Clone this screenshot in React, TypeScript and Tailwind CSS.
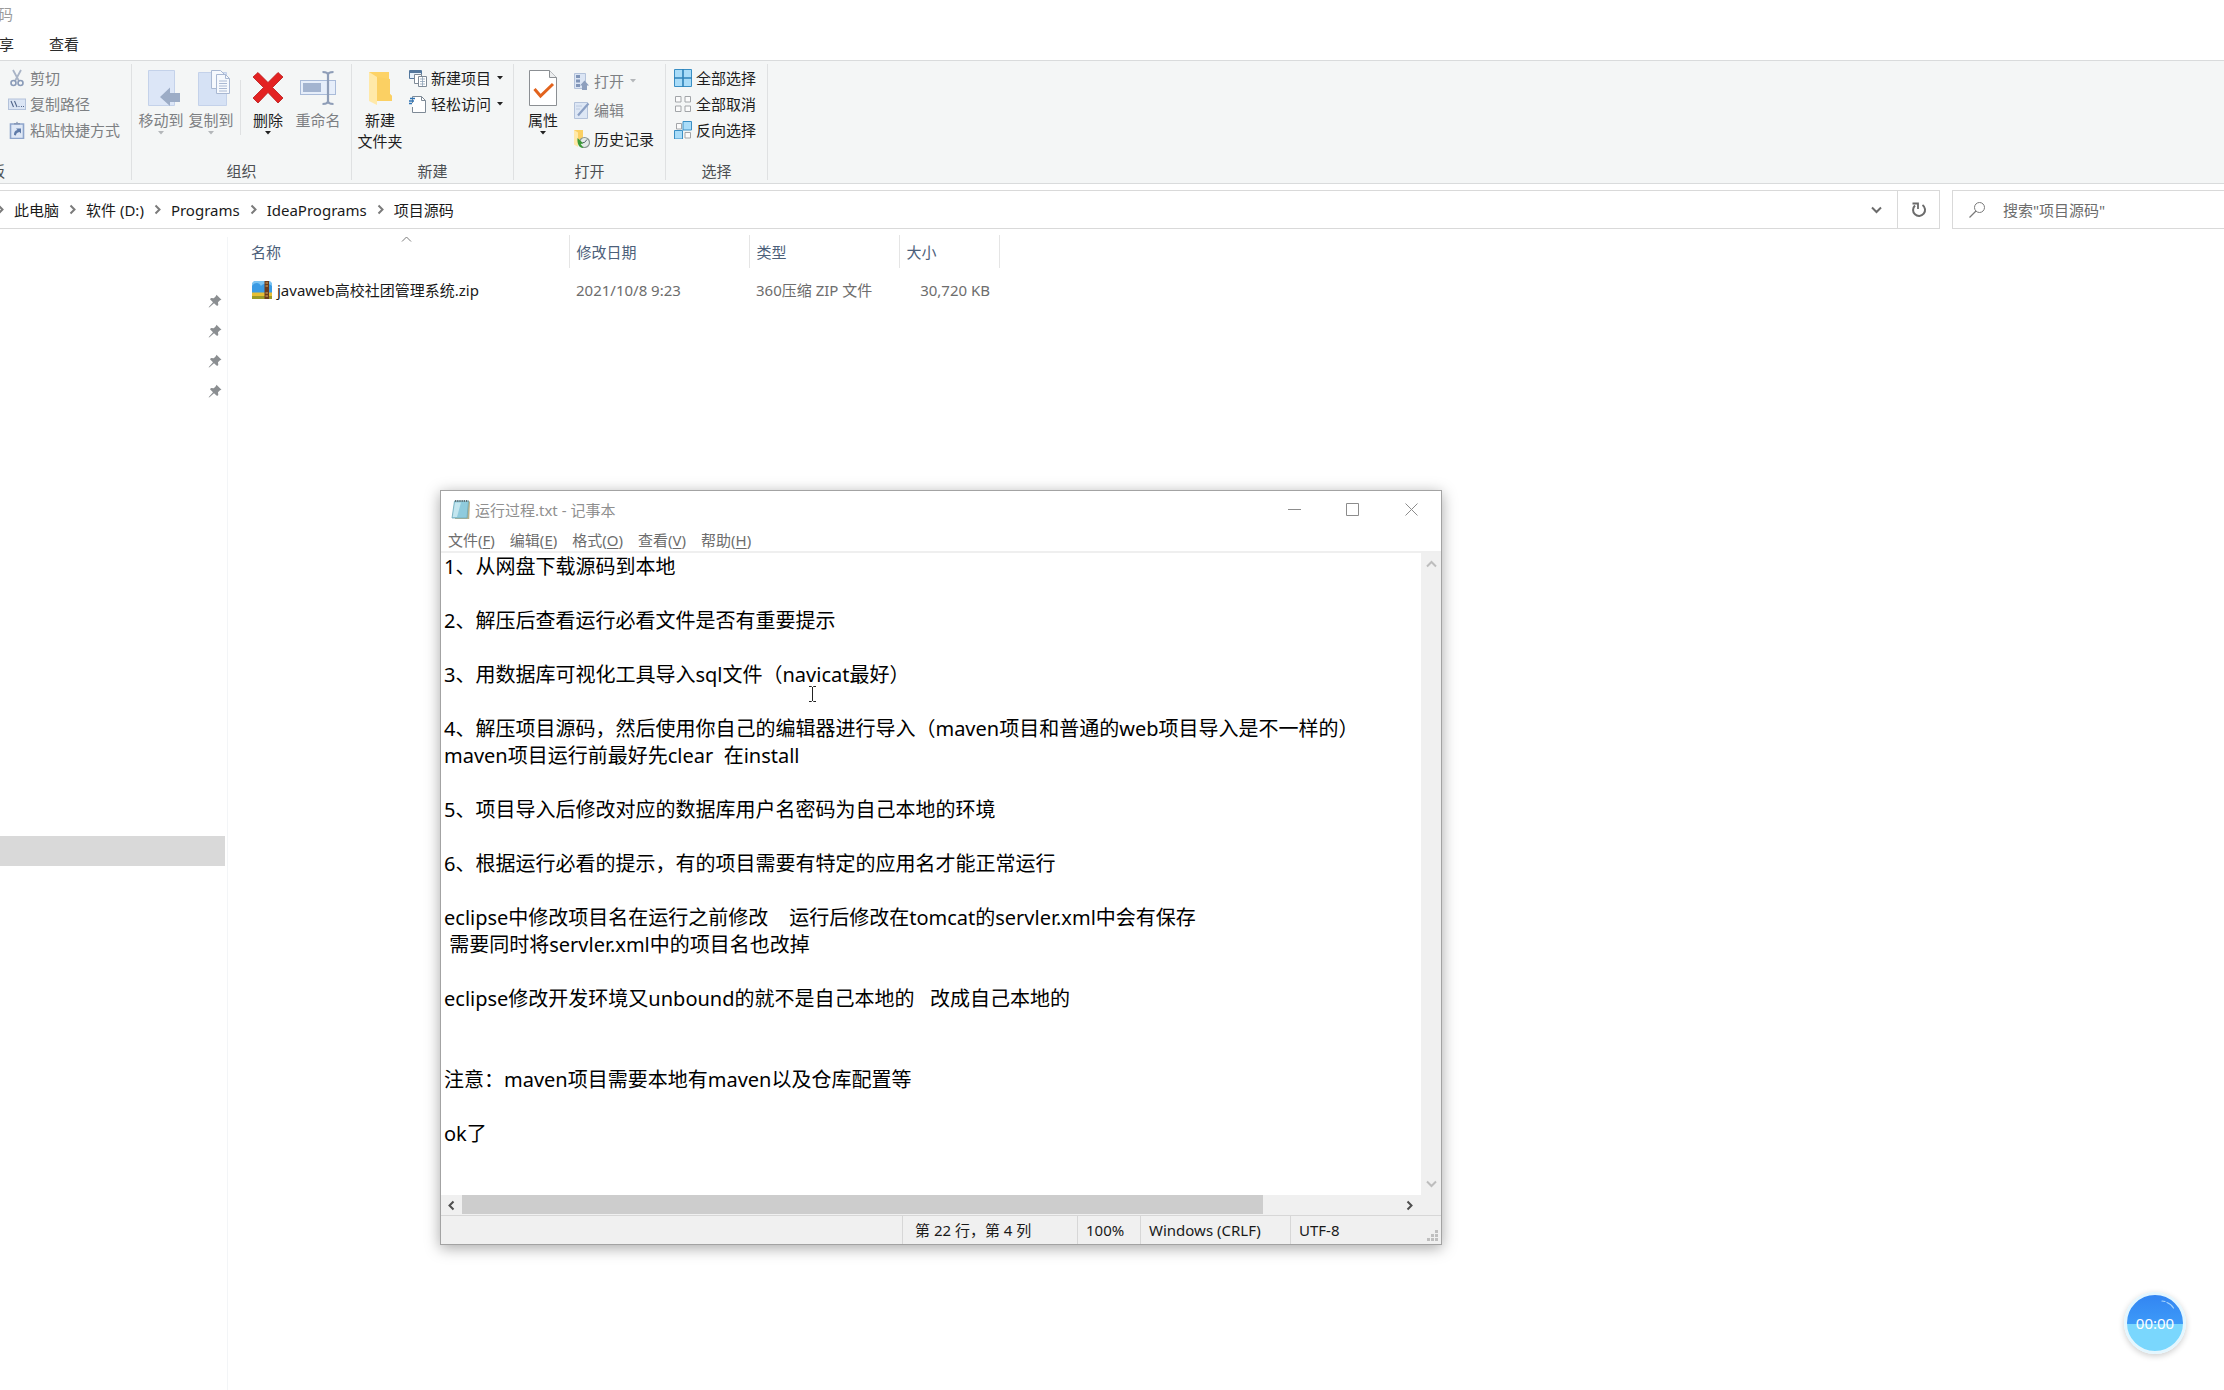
import React from "react";

type IconProps = { children: React.ReactNode; className?: string; box?: string };

const Svg: React.FC<IconProps> = ({ children, className = "w-[18px] h-[18px]", box = "0 0 18 18" }) => (
  <svg className={`shrink-0 ${className}`} viewBox={box} fill="none" aria-hidden="true">
    {children}
  </svg>
);

const Caret: React.FC<{ muted?: boolean }> = ({ muted }) => (
  <Svg className="w-[6px] h-[4px]" box="0 0 6 4">
    <path d="M0 0h6L3 3.4z" fill={muted ? "#b4b7ba" : "#222"} />
  </Svg>
);

const CutIcon = () => (
  <Svg>
    <path d="M5 1l6 11M13 1L7 12" stroke="#a9b4c6" strokeWidth="1.8" />
    <circle cx="5.5" cy="14" r="2.5" stroke="#8a9bb8" strokeWidth="1.6" />
    <circle cx="12.5" cy="14" r="2.5" stroke="#8a9bb8" strokeWidth="1.6" />
  </Svg>
);

const PathIcon = () => (
  <Svg>
    <rect x=".5" y="4" width="17" height="10.5" fill="#dbe5f4" stroke="#b3c2da" />
    <path d="M3 6l2.5 6M6.500 6L9 12" stroke="#51658a" strokeWidth="1.1" />
    <path d="M10.500 11.500h1M13 11.500h1M15 11.500h1" stroke="#51658a" />
  </Svg>
);

const PasteShortcutIcon = () => (
  <Svg>
    <path d="M2.500 3h13v14.500h-13z" fill="#dfe8f6" stroke="#8ea5cb" strokeWidth="1.6" />
    <path d="M6 3.500V2h2l1-1.500L10 2h2v1.500z" fill="#8798b5" />
    <path d="M6 14c0-3 1-4.500 3.500-5L8 7.500h5v5L11.500 11C9 11.500 8 12.500 8 14.500z" fill="#5f7ba8" />
  </Svg>
);

const MoveToIcon = () => (
  <Svg className="w-10 h-9" box="-6 0 40 36">
    <path d="M1.500.5h26v35h-26z" fill="#dce6f7" stroke="#c4d2ea" />
    <path d="M13 27l10-9.500v5.500h10v9H23v4z" fill="#9cacc6" />
  </Svg>
);

const CopyToIcon = () => (
  <Svg className="w-10 h-9" box="-6 0 40 36">
    <path d="M1.500 2.500h28v33h-28z" fill="#d6e2f5" stroke="#c4d2ea" />
    <path d="M14.500.5h9l4 4v14h-13z" fill="#f6f9fd" stroke="#a9b8d2" />
    <path d="M19.500 4.500h9l4 4v15h-13z" fill="#f6f9fd" stroke="#a9b8d2" />
    <path d="M28.500 4.500v4h4M22 11h8M22 13.500h8M22 16h8M22 18.500h8M22 21h8" stroke="#a9b8d2" />
  </Svg>
);

const DeleteIcon = () => (
  <Svg className="w-8 h-9" box="0 0 32 36">
    <path d="M1 7l5-4.500 10 10 10-10L31 7 20.500 17.500 31 28l-5 5-10-10.500L6 33l-5-5 10.500-10.500z" fill="#e32222" stroke="#b81818" strokeWidth=".8" />
  </Svg>
);

const RenameIcon = () => (
  <Svg className="w-[38px] h-9" box="0 0 38 36">
    <rect x="1.500" y="10.500" width="35" height="14" fill="#e6eefa" stroke="#a9bbd9" />
    <rect x="4" y="13" width="18" height="9" fill="#a3b4d0" />
    <path d="M23.500 2c3 0 5.500.8 5.500 3v26c0 2-2.500 3-5.500 3M34.500 2c-3 0-5.500.8-5.500 3v26c0 2 2.500 3 5.500 3" stroke="#8e9db7" strokeWidth="2.200" />
  </Svg>
);

const FolderIcon = () => (
  <Svg className="w-6 h-9" box="0 0 24 36">
    <path d="M1 2h20v21l3 3v5H1z" fill="#fdd367" />
    <path d="M9 7v24h15v-5l-2-2V9z" fill="#fbd063" />
    <path d="M1 2l8 5v28L1 31z" fill="#ffe9a9" />
  </Svg>
);

const NewItemIcon = () => (
  <Svg>
    <path d="M.5 1.500h12v8H.5z" fill="#e6f1fb" stroke="#54789e" />
    <path d="M.5 2h12v2H.5z" fill="#54789e" />
    <path d="M5.500 5.500h7v9h-7z" fill="#fff" stroke="#7e8a96" />
    <path d="M9.500 7.500h8v10h-8z" fill="#fff" stroke="#7e8a96" />
    <path d="M11 10h5M11 12.500h5M11 15h5M13.500 8v9" stroke="#8fa3b7" strokeWidth=".8" />
  </Svg>
);

const EasyAccessIcon = () => (
  <Svg>
    <path d="M3.500 8V1.500h9l4 4v12h-13V12" fill="#fff" stroke="#7e8a96" />
    <path d="M12.500 1.500v4h4" stroke="#7e8a96" />
    <path d="M1 3.500h5M0 6h5M0 8.500h3" stroke="#2f74b5" strokeWidth="1.300" />
  </Svg>
);

const PropertiesIcon = () => (
  <Svg className="w-[30px] h-9" box="0 0 30 36">
    <path d="M1.500.5h20l7 7v28h-27z" fill="#fff" stroke="#8b8f93" />
    <path d="M21.500.5v7h7" fill="#eceeef" stroke="#8b8f93" />
    <path d="M6.500 19l6 7L25 14" stroke="#e2631d" strokeWidth="3" />
  </Svg>
);

const OpenIcon = () => (
  <Svg>
    <path d="M2.500 1.500h11v15h-11z" fill="#dbe5f4" stroke="#b3c2da" />
    <path d="M4 3h4v3H4zM4 7.500h4v3H4zM4 12h4v3H4z" fill="#8095b8" />
    <path d="M8 13.500l4.500-5 4.500 5h-2V18h-5v-4.500z" fill="#8d9fbd" />
  </Svg>
);

const EditIcon = () => (
  <Svg>
    <path d="M2.500 1.500h13v16h-13z" fill="#dde7f5" stroke="#b3c2da" />
    <path d="M16.500 2.500L9 11l-3 3.500" stroke="#8ba0c4" strokeWidth="2.200" />
    <path d="M4 5h6M4 8h4" stroke="#bccae0" />
  </Svg>
);

const HistoryIcon = () => (
  <Svg>
    <path d="M2 0h9v13H2z" fill="#fbd063" />
    <path d="M2 0l4 2.500V17l-4-2.500z" fill="#ffe9a9" />
    <circle cx="12.500" cy="12.500" r="5" fill="#e3ebe8" stroke="#8b9693" strokeWidth="1.200" />
    <path d="M12.500 12.500l2.500-3M12.500 12.500h-2" stroke="#55636e" />
    <path d="M5.500 8l6 5.500-3 .5 3 4c-4.500 0-6.500-4-6-10z" fill="#3b9a36" />
  </Svg>
);

const SelectAllIcon = () => (
  <Svg>
    <path d="M.5.5h17v17H.5z" fill="#a9dcf8" stroke="#3a8fc4" />
    <path d="M9 0v18M0 9h18" stroke="#2f83b9" strokeWidth="1.600" />
  </Svg>
);

const SelectNoneIcon = () => (
  <Svg>
    <path d="M1.500 1.500h5.500V7H1.500zM11 1.500h5.500V7H11zM1.500 11h5.500v5.500H1.500zM11 11h5.500v5.500H11z" fill="#fbfbfb" stroke="#a2a5a8" />
  </Svg>
);

const InvertIcon = () => (
  <Svg>
    <path d="M2.500 2.500h5V8h-5zM11 11.500h5.500V17H11z" fill="#fbfbfb" stroke="#a2a5a8" />
    <path d="M9 .5h8.500V9H9zM.5 9.500h8V18h-8z" fill="#a9dcf8" stroke="#3a8fc4" />
  </Svg>
);

const PinIcon = () => (
  <Svg className="w-[14px] h-[14px]" box="0 0 14 14">
    <path d="M8.500.8L13.500 5.800l-1.500.4-2 2 .3 2.800-1.200 1L6 9.200 1.500 13.200.6 13.600l.4-.9L5 8.200 2 5.200l1-1.200 2.800.3 2-2z" fill="#8b8e91" />
  </Svg>
);

const ZipIcon = () => (
  <Svg className="w-[20px] h-[18px]" box="0 0 20 18">
    <path d="M0 2l2-2h16l2 2v12H0z" fill="#7cc4f2" />
    <path d="M0 5c3-4 7-4 9 0 2-3 8-3 11 0v7H0z" fill="#3b9be4" />
    <path d="M0 11.500h20V18H0z" fill="#e6bf35" />
    <path d="M0 15h20v3H0z" fill="#9b9a26" />
    <path d="M12.500 0h4.500v18h-4.500z" fill="#6b3a1c" />
    <path d="M13.500 2h2.500M13.500 5h2.500M13.500 12h2.500M13.500 15h2.500" stroke="#e0b060" />
  </Svg>
);

const NotepadIcon = () => (
  <Svg className="w-[20px] h-[21px]" box="0 0 20 21">
    <path d="M5 2.500h14l-.8 17.500H4z" fill="#b8b18a" />
    <path d="M3.500 2h14L16 19H1z" fill="#8fcbdd" stroke="#6fa9b9" strokeWidth=".8" />
    <path d="M4 3.500h6L6 18H1.800z" fill="#c3e6ef" />
    <path d="M4 2h13.500" stroke="#5f6f75" strokeWidth="2" strokeDasharray="1.200 1" />
  </Svg>
);

type Chevron = "right" | "left" | "up" | "down";
const chevronPaths: Record<Chevron, string> = {
  right: "M3.500 1.500L7.500 5.500 3.500 9.500",
  left: "M7.500 1.500L3.500 5.500 7.500 9.500",
  up: "M1 7.500L5.500 3 10 7.500",
  down: "M1 3.500L5.500 8 10 3.500",
};

const Chev: React.FC<{ dir: Chevron; color?: string; width?: number }> = ({ dir, color = "#7b7b7b", width = 2 }) => (
  <Svg className="w-[11px] h-[11px]" box="0 0 11 11">
    <path d={chevronPaths[dir]} stroke={color} strokeWidth={width} />
  </Svg>
);

type ButtonProps = {
  icon: React.ReactNode;
  label: React.ReactNode;
  muted?: boolean;
  caret?: boolean;
};

const BigButton: React.FC<ButtonProps> = ({ icon, label, muted, caret }) => (
  <button className={`flex w-[50px] flex-col items-center pt-[9px] leading-[21px] ${muted ? "text-[#7d8083]" : "text-[#1e1e1e]"}`}>
    {icon}
    <span className="mt-1 whitespace-nowrap">{label}</span>
    {caret && <Caret muted={muted} />}
  </button>
);

const SmallButton: React.FC<ButtonProps & { tall?: boolean }> = ({ icon, label, muted, caret, tall }) => (
  <button className={`flex items-center gap-1 whitespace-nowrap ${tall ? "h-[29px]" : "h-[26px]"} ${muted ? "text-[#7d8083]" : "text-[#1e1e1e]"}`}>
    {icon}
    {label}
    {caret && (
      <span className="ml-0.5">
        <Caret muted={muted} />
      </span>
    )}
  </button>
);

const Group: React.FC<{ label: string; className?: string; children: React.ReactNode }> = ({ label, className = "", children }) => (
  <>
    <section className="flex flex-col justify-between">
      <div className={`flex ${className}`}>{children}</div>
      <h2 className="h-6 text-center leading-6 text-[#4c4f52]">{label}</h2>
    </section>
    <div className="my-[3px] w-px bg-[#dfe1e2]" />
  </>
);

const Ribbon = () => (
  <div className="flex h-[124px] overflow-hidden border-y border-[#d9dbdc] bg-[#f4f6f6]">
    <section className="flex w-[131px] shrink-0 flex-col justify-between">
      <div className="flex flex-col pt-1 pl-2">
        <SmallButton icon={<CutIcon />} label="剪切" muted />
        <SmallButton icon={<PathIcon />} label="复制路径" muted />
        <SmallButton icon={<PasteShortcutIcon />} label="粘贴快捷方式" muted />
      </div>
      <h2 className="flex h-6 w-[5px] justify-end overflow-hidden leading-6 text-[#4c4f52]">板</h2>
    </section>
    <div className="my-[3px] w-px bg-[#dfe1e2]" />
    <Group label="组织" className="pl-1 pr-2">
      <BigButton icon={<MoveToIcon />} label="移动到" muted caret />
      <BigButton icon={<CopyToIcon />} label="复制到" muted caret />
      <div className="mt-[19px] mr-0.5 ml-1 w-px bg-[#dfe1e2]" />
      <BigButton icon={<DeleteIcon />} label="删除" caret />
      <BigButton icon={<RenameIcon />} label="重命名" muted />
    </Group>
    <Group label="新建" className="pl-[3px] pr-2.5">
      <BigButton
        icon={<FolderIcon />}
        label={
          <>
            新建
            <br />
            文件夹
          </>
        }
      />
      <div className="ml-1 flex flex-col pt-1">
        <SmallButton icon={<NewItemIcon />} label="新建项目" caret />
        <SmallButton icon={<EasyAccessIcon />} label="轻松访问" caret />
      </div>
    </Group>
    <Group label="打开" className="pl-1 pr-[11px]">
      <BigButton icon={<PropertiesIcon />} label="属性" caret />
      <div className="ml-1 flex flex-col pt-[5px]">
        <SmallButton icon={<OpenIcon />} label="打开" muted caret tall />
        <SmallButton icon={<EditIcon />} label="编辑" muted tall />
        <SmallButton icon={<HistoryIcon />} label="历史记录" tall />
      </div>
    </Group>
    <Group label="选择" className="pl-2 pr-[11px]">
      <div className="flex flex-col pt-1">
        <SmallButton icon={<SelectAllIcon />} label="全部选择" />
        <SmallButton icon={<SelectNoneIcon />} label="全部取消" />
        <SmallButton icon={<InvertIcon />} label="反向选择" />
      </div>
    </Group>
  </div>
);

const crumbs = ["此电脑", "软件 (D:)", "Programs", "IdeaPrograms", "项目源码"];

const AddressBar = () => (
  <div className="mt-1.5 flex h-[39px]">
    <div className="flex flex-1 border-y border-r border-[#d9d9d9]">
      <nav className="flex flex-1 items-center text-[#1a1a1a]">
        {crumbs.map((crumb, index) => (
          <React.Fragment key={crumb}>
            <span className={index === 0 ? "-ml-[5px] mr-2" : "mx-2"}>
              <Chev dir="right" />
            </span>
            <a href="#">{crumb}</a>
          </React.Fragment>
        ))}
      </nav>
      <button className="mr-[15px]" aria-label="展开">
        <Chev dir="down" color="#6b6b6b" />
      </button>
      <button className="flex w-[42px] items-center justify-center border-l border-[#d9d9d9]" aria-label="刷新">
        <Svg className="w-4 h-4" box="0 0 16 16">
          <path d="M11.500 3A6 6 0 1 1 4 3.500" stroke="#6b6b6b" strokeWidth="2" />
          <path d="M1.500 1.500h5.500V7" stroke="#6b6b6b" strokeWidth="1.800" />
        </Svg>
      </button>
    </div>
    <label className="ml-3 flex w-[272px] items-center border-y border-l border-[#d9d9d9] pl-4">
      <Svg className="w-4 h-4" box="0 0 16 16">
        <circle cx="10.500" cy="5.500" r="5" stroke="#7a7a7a" />
        <path d="M7 9L.5 15.500" stroke="#7a7a7a" strokeWidth="1.200" />
      </Svg>
      <input
        className="ml-[18px] min-w-0 flex-1 outline-none placeholder:text-[#6d6d6d]"
        placeholder={'搜索"项目源码"'}
        aria-label="搜索"
      />
    </label>
  </div>
);

const Sidebar = () => (
  <aside className="mt-2 w-[228px] shrink-0 border-r border-[#f3f5f7]">
    <ul className="pt-[49px]">
      {[0, 1, 2, 3].map((item) => (
        <li key={item} className="flex h-[30px] items-center justify-end pr-[5px]">
          <PinIcon />
        </li>
      ))}
    </ul>
    <div className="mt-[430px] mr-0.5 h-[30px] bg-[#d9d9d9]" />
  </aside>
);

const FileTable = () => (
  <div className="relative pt-[6px] pl-[16px]">
    <table className="table-fixed text-left">
      <thead>
        <tr className="h-[33px] text-[#4c607a]">
          <th className="w-[325px] border-r border-[#e5e5e5] pl-[7px] font-normal">名称</th>
          <th className="w-[180px] border-r border-[#e5e5e5] pl-[7px] font-normal">修改日期</th>
          <th className="w-[150px] border-r border-[#e5e5e5] pl-[7px] font-normal">类型</th>
          <th className="w-[100px] border-r border-[#e5e5e5] pl-[7px] font-normal">大小</th>
        </tr>
      </thead>
      <tbody className="text-[#6d6d6d]">
        <tr className="h-[44px]">
          <td className="pl-2 text-[#1a1a1a]">
            <span className="flex items-center gap-[5px]">
              <ZipIcon />
              javaweb高校社团管理系统.zip
            </span>
          </td>
          <td className="pl-[7px]">2021/10/8 9:23</td>
          <td className="pl-[7px]">360压缩 ZIP 文件</td>
          <td className="pr-[9px] text-right">30,720 KB</td>
        </tr>
      </tbody>
    </table>
    <span className="absolute top-[5px] left-[173px]">
      <Chev dir="up" color="#7b7b7b" width={1} />
    </span>
  </div>
);

const notes = [
  "1、从网盘下载源码到本地",
  "",
  "2、解压后查看运行必看文件是否有重要提示",
  "",
  "3、用数据库可视化工具导入sql文件（navicat最好）",
  "",
  "4、解压项目源码，然后使用你自己的编辑器进行导入（maven项目和普通的web项目导入是不一样的）",
  "maven项目运行前最好先clear  在install",
  "",
  "5、项目导入后修改对应的数据库用户名密码为自己本地的环境",
  "",
  "6、根据运行必看的提示，有的项目需要有特定的应用名才能正常运行",
  "",
  "eclipse中修改项目名在运行之前修改    运行后修改在tomcat的servler.xml中会有保存",
  " 需要同时将servler.xml中的项目名也改掉",
  "",
  "eclipse修改开发环境又unbound的就不是自己本地的   改成自己本地的",
  "",
  "",
  "注意：maven项目需要本地有maven以及仓库配置等",
  "",
  "ok了",
].join("\n");

const menus = [
  ["文件", "F"],
  ["编辑", "E"],
  ["格式", "O"],
  ["查看", "V"],
  ["帮助", "H"],
];

const Notepad = () => (
  <div className="absolute top-[490px] left-[440px] flex w-[1002px] flex-col border border-[#a3a3a3] bg-white shadow-[0_3px_14px_rgba(0,0,0,0.35)]">
    <header className="flex h-[37px] items-center pl-[10px] text-[#8f8f8f]">
      <NotepadIcon />
      <h1 className="ml-1 flex-1">运行过程.txt - 记事本</h1>
      <button className="flex w-[58px] justify-center" aria-label="最小化">
        <Svg className="w-[13px] h-[13px]" box="0 0 13 13">
          <path d="M0 6.500h13" stroke="#8c8c8c" />
        </Svg>
      </button>
      <button className="flex w-[58px] justify-center" aria-label="最大化">
        <Svg className="w-[13px] h-[13px]" box="0 0 13 13">
          <path d="M.5.5h12v12H.5z" stroke="#8c8c8c" />
        </Svg>
      </button>
      <button className="flex w-[60px] justify-center" aria-label="关闭">
        <Svg className="w-[13px] h-[13px]" box="0 0 13 13">
          <path d="M.5.5l12 12M12.500.5l-12 12" stroke="#8c8c8c" />
        </Svg>
      </button>
    </header>
    <nav className="flex h-[25px] items-center gap-[15px] border-b-2 border-[#efefef] pl-[7px] text-[#6d6d6d]">
      {menus.map(([name, key]) => (
        <button key={key}>
          {name}(<u className="underline-offset-2">{key}</u>)
        </button>
      ))}
    </nav>
    <div className="flex">
      <textarea
        className="h-[642px] flex-1 resize-none overflow-hidden pl-[3px] text-[20px] leading-[27px] whitespace-pre text-black outline-none"
        defaultValue={notes}
        wrap="off"
        spellCheck={false}
        aria-label="文本编辑器"
      />
      <div className="flex w-[20px] flex-col items-center justify-between bg-[#f0f0f0] py-[6px]">
        <Chev dir="up" color="#bdbdbd" />
        <Chev dir="down" color="#bdbdbd" />
      </div>
    </div>
    <div className="flex h-[20px] items-center bg-[#f0f0f0] pr-[26px]">
      <span className="flex w-[21px] justify-center">
        <Chev dir="left" color="#4f4f4f" />
      </span>
      <div className="flex h-[19px] flex-1 self-start">
        <div className="w-[85%] bg-[#cdcdcd]" />
      </div>
      <Chev dir="right" color="#4f4f4f" />
    </div>
    <footer className="flex h-[29px] border-t border-[#d7d7d7] bg-[#f0f0f0] text-[#1a1a1a]">
      <div className="flex-1" />
      <div className="flex w-[175px] items-center border-l border-[#d7d7d7] pl-3 whitespace-nowrap">第 22 行，第 4 列</div>
      <div className="flex w-[63px] items-center border-l border-[#d7d7d7] pl-2">100%</div>
      <div className="flex w-[150px] items-center border-l border-[#d7d7d7] pl-2 whitespace-nowrap">Windows (CRLF)</div>
      <div className="flex w-[151px] items-center justify-between border-l border-[#d7d7d7] pr-[2px] pl-2">
        UTF-8
        <Svg className="w-[12px] h-[12px] self-end mb-[2px]" box="0 0 12 12">
          <path d="M8 0h3v3H8zM4 4h3v3H4zM8 4h3v3H8zM0 8h3v3H0zM4 8h3v3H4zM8 8h3v3H8z" fill="#bfbfbf" />
        </Svg>
      </div>
    </footer>
  </div>
);

const TextCursor = () => (
  <span className="pointer-events-none absolute top-[686px] left-[808px]">
    <Svg className="w-[9px] h-[16px]" box="0 0 9 16">
      <path d="M1 .5h2.500l1 1 1-1H8M1 15.500h2.500l1-1 1 1H8M4.500 1v14" stroke="#222" />
    </Svg>
  </span>
);

const Timer = () => (
  <button className="absolute right-[38px] bottom-9 flex h-[62px] w-[62px] items-center justify-center rounded-full border-[3px] border-[#e4f6fe] bg-linear-to-b from-[#3385f2] from-0% via-[#3d9af8] via-52% to-[#7ad7fd] to-52% text-[15px] text-white shadow-[0_2px_6px_rgba(0,0,0,0.2)]">
    00:00
    <Svg className="absolute top-[5px] right-[8px] w-[14px] h-[10px]" box="0 0 14 10">
      <path d="M1 1l3 .5M6 2.500c3 1 5 3 6.500 5.500" stroke="#a9d6fc" strokeWidth="1.200" strokeLinecap="round" />
    </Svg>
  </button>
);

const App: React.FC = () => {
  return (
    <div className="relative flex min-h-screen flex-col overflow-hidden bg-white font-['Noto_Sans','Noto_Sans_CJK_SC',sans-serif] text-[15px] leading-[20px]">
      <div className="flex h-7 items-center text-[#9b9b9b]">
        <span className="-ml-0.5">码</span>
      </div>
      <div className="flex h-8 items-center gap-[35px] text-[#2b2b2b]">
        <button className="-ml-px">享</button>
        <button>查看</button>
      </div>
      <Ribbon />
      <AddressBar />
      <main className="flex flex-1">
        <Sidebar />
        <FileTable />
      </main>
      <Notepad />
      <TextCursor />
      <Timer />
    </div>
  );
};

export default App;
